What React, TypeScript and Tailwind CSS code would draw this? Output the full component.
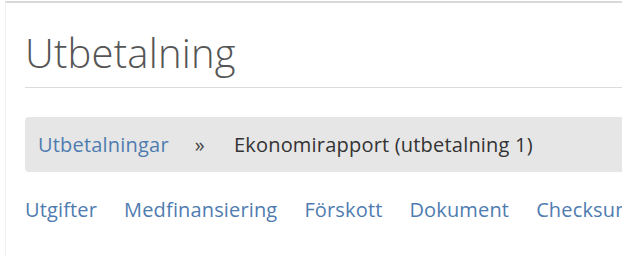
import React from "react";

export default function App() {
  const tabs = ["Utgifter", "Medfinansiering", "Förskott", "Dokument", "Checksumma"];
  return (
    <div
      className="w-[622px] h-[256px] overflow-hidden bg-white pt-px"
      style={{ fontFamily: '"Open Sans", sans-serif' }}
    >
      <div className="h-full border-t-2 border-t-[#d9d9d9] ml-[5px] border-l border-l-[#f0f0f0] pl-[19px]">
        <div className="w-[700px]">
          <h1 className="text-[40px] font-light text-[#555] leading-none pt-[30px] pb-[14px] border-b border-[#dcdcdc] tracking-[0.2px]">
            Utbetalning
          </h1>
          <div className="mt-[29px] h-[55px] rounded-[4px] bg-[#e6e6e6] flex items-center pl-[13px] text-[20px] tracking-[0.2px]">
            <span className="text-[#4f7cb0]">Utbetalningar</span>
            <span className="text-[#444] ml-[26px] mr-[29px]">»</span>
            <span className="text-[#333]">Ekonomirapport (utbetalning 1)</span>
          </div>
          <div className="mt-[25px] flex gap-[27px] text-[20px] text-[#4f7cb0] leading-[26px] tracking-[0.15px]">
            {tabs.map((t) => (
              <span key={t}>{t}</span>
            ))}
          </div>
        </div>
      </div>
    </div>
  );
}
